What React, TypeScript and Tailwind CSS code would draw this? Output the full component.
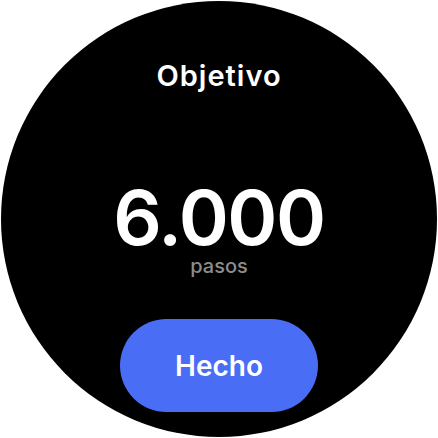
export default function App() {
  return (
    <div className="w-[438px] h-[438px] bg-white flex items-center justify-center" style={{ fontFamily: "Inter, 'Noto Sans', sans-serif" }}>
      <div className="w-[436px] h-[436px] rounded-full bg-black flex flex-col items-center">
        <div className="mt-[58px] text-white text-[29px] leading-[34px] font-semibold tracking-[1px]">Objetivo</div>
        <div className="mt-[88px] text-white text-[76px] leading-[72px] font-semibold tracking-[-1.5px]">6.000</div>
        <div className="mt-[1px] text-[#8c8c8c] text-[20px] leading-[24px] font-medium">pasos</div>
        <div className="mt-[41px] w-[198px] h-[93px] rounded-full bg-[#4a6df6] flex items-center justify-center text-white text-[28px] font-semibold">Hecho</div>
      </div>
    </div>
  );
}
